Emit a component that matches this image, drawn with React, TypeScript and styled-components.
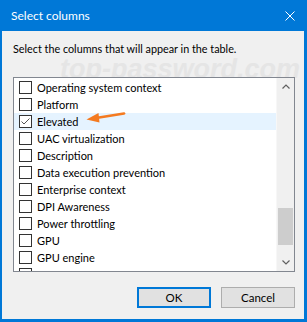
import React from 'react'
import styled, { createGlobalStyle } from 'styled-components'

const GlobalStyle = createGlobalStyle`
  html, body {
    margin: 0;
    padding: 0;
    background: #ffffff;
  }
  body {
    font-family: Lato, 'Liberation Sans', Arial, sans-serif;
    font-size: 11px;
    color: #000000;
  }
`

const Window = styled.div`
  width: 307px;
  height: 322px;
  box-sizing: border-box;
  border: solid #0078d7;
  border-width: 0 3px 3px 2px;
  background: #f0f0f0;
  display: flex;
  flex-direction: column;
`

const TitleBar = styled.div`
  height: 31px;
  flex: none;
  background: #0078d7;
  color: #ffffff;
  display: flex;
  align-items: center;
  justify-content: space-between;
  padding: 0 9px 0 9px;
`

const Title = styled.span`
  font-size: 12px;
  line-height: 16px;
`

const CloseIcon = styled.svg`
  display: block;
  width: 10px;
  height: 10px;
`

const Body = styled.div`
  position: relative;
  flex: 1;
  display: flex;
  flex-direction: column;
  padding: 10px 9px 0 11px;
`

const Watermark = styled.div`
  position: absolute;
  left: 58px;
  top: 28px;
  font-family: 'Liberation Sans', Arial, sans-serif;
  font-size: 27px;
  font-weight: bold;
  font-style: italic;
  line-height: 20px;
  color: #e5e5e5;
  white-space: nowrap;
  pointer-events: none;
  user-select: none;
`

const Intro = styled.div`
  font-size: 10.8px;
  line-height: 16px;
  margin-bottom: 20px;
  position: relative;
`

const ListBox = styled.div`
  position: relative;
  height: 195px;
  box-sizing: border-box;
  border: 1px solid #828790;
  background: #ffffff;
  display: flex;
`

const List = styled.div`
  flex: 1;
  padding-top: 1px;
  overflow: hidden;
`

const Row = styled.div<{ $selected?: boolean }>`
  height: 17px;
  display: flex;
  align-items: center;
  gap: 5px;
  padding-left: 5px;
  background: ${({ $selected }) => ($selected ? '#e5f3ff' : 'transparent')};
  white-space: nowrap;
`

const Box = styled.span`
  width: 13px;
  height: 13px;
  flex: none;
  box-sizing: border-box;
  border: 1px solid #333333;
  background: #ffffff;
  display: flex;
  align-items: center;
  justify-content: center;
`

const Label = styled.span`
  font-size: 11px;
  line-height: 16px;
`

const ScrollBar = styled.div`
  width: 18px;
  flex: none;
  box-sizing: border-box;
  border-left: 1px solid #f7f7f7;
  background: #f0f0f0;
  display: flex;
  flex-direction: column;
`

const ScrollArrow = styled.div`
  height: 17px;
  flex: none;
  display: flex;
  align-items: center;
  justify-content: center;
`

const Track = styled.div`
  flex: 1;
  display: flex;
  flex-direction: column;
`

const Thumb = styled.div<{ $offset: number; $size: number }>`
  margin: ${({ $offset }) => $offset}px 1px 0 1px;
  height: ${({ $size }) => $size}px;
  background: #cdcdcd;
`

const Pointer = styled.svg`
  position: absolute;
  left: 70px;
  top: 33px;
  width: 42px;
  height: 14px;
  overflow: visible;
  pointer-events: none;
`

const Buttons = styled.div`
  display: flex;
  justify-content: flex-end;
  gap: 10px;
  margin-top: 15px;
`

const Button = styled.button<{ $default?: boolean }>`
  width: 74px;
  height: 21px;
  box-sizing: border-box;
  padding: 0;
  margin: 0;
  font-family: inherit;
  font-size: 11.5px;
  color: #000000;
  background: #e1e1e1;
  border: ${({ $default }) => ($default ? '2px solid #0078d7' : '1px solid #adadad')};
`

// the last entry is scrolled mostly out of view, only its checkbox edge shows
const columns = [
  'Operating system context',
  'Platform',
  'Elevated',
  'UAC virtualization',
  'Description',
  'Data execution prevention',
  'Enterprise context',
  'DPI Awareness',
  'Power throttling',
  'GPU',
  'GPU engine',
  '',
]

const checked = ['Elevated']

const Chevron = ({ up }: { up?: boolean }) => (
  <svg width="8" height="5" viewBox="0 0 8 5">
    <polyline
      points={up ? '0.5,4.5 4,1 7.5,4.5' : '0.5,0.5 4,4 7.5,0.5'}
      fill="none"
      stroke="#606060"
      strokeWidth="1.2"
    />
  </svg>
)

const App = () => {
  return (
    <>
      <GlobalStyle />
      <Window>
        <TitleBar>
          <Title>Select columns</Title>
          <CloseIcon viewBox="0 0 10 10">
            <path d="M0.5 0.5 L9.5 9.5 M9.5 0.5 L0.5 9.5" stroke="#ffffff" strokeWidth="1" />
          </CloseIcon>
        </TitleBar>
        <Body>
          <Watermark>top-password.com</Watermark>
          <Intro>Select the columns that will appear in the table.</Intro>
          <ListBox>
            <List>
              {columns.map((name, i) => (
                <Row key={i} $selected={name === 'Elevated'}>
                  <Box>
                    {checked.includes(name) && (
                      <svg width="11" height="11" viewBox="0 0 11 11">
                        <polyline points="1.5,5.5 4,8 9.5,2.5" fill="none" stroke="#555555" strokeWidth="1" />
                      </svg>
                    )}
                  </Box>
                  {name && <Label>{name}</Label>}
                </Row>
              ))}
            </List>
            <ScrollBar>
              <ScrollArrow>
                <Chevron up />
              </ScrollArrow>
              <Track>
                <Thumb $offset={113} $size={37} />
              </Track>
              <ScrollArrow>
                <Chevron />
              </ScrollArrow>
            </ScrollBar>
            <Pointer viewBox="0 0 42 14">
              <line x1="40" y1="2.5" x2="12" y2="7" stroke="#f47a20" strokeWidth="2.6" strokeLinecap="round" />
              <polygon points="2.5,8.5 14.5,2 15.5,11.5" fill="#f47a20" />
            </Pointer>
          </ListBox>
          <Buttons>
            <Button $default>OK</Button>
            <Button>Cancel</Button>
          </Buttons>
        </Body>
      </Window>
    </>
  )
}

export default App
